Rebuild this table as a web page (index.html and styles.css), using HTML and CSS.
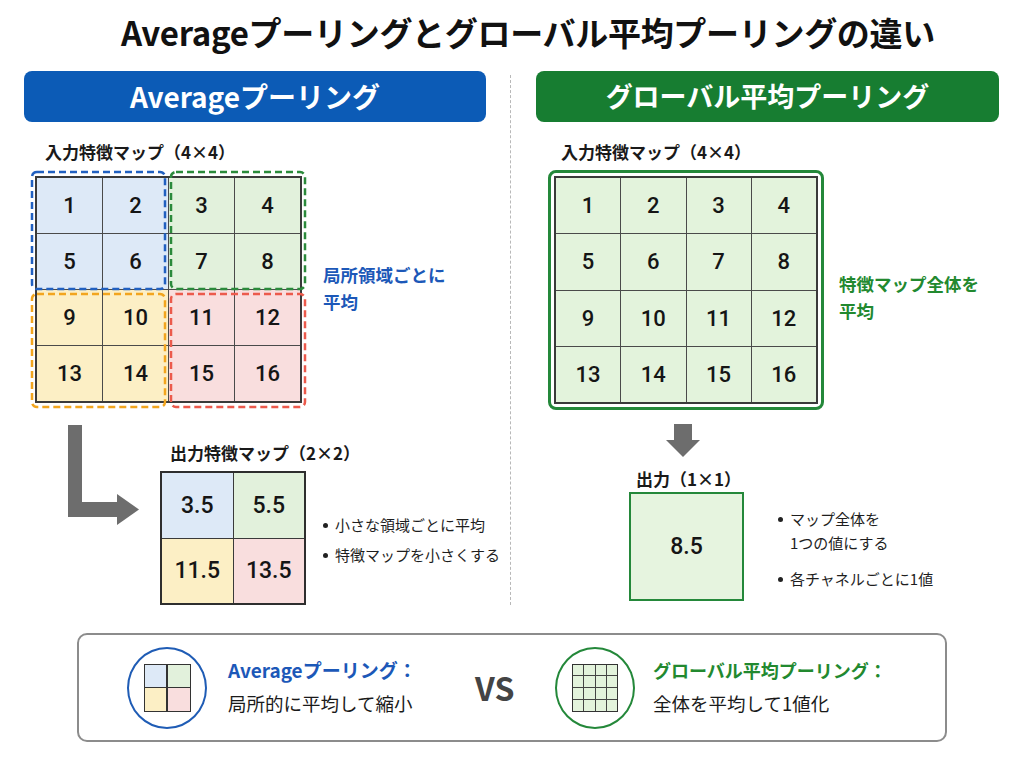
FILE: index.html
```html
<!DOCTYPE html>
<html lang="ja">
<head>
<meta charset="utf-8">
<title>Averageプーリングとグローバル平均プーリングの違い</title>
<link rel="stylesheet" href="styles.css">
</head>
<body>
<h1 class="title">Averageプーリングとグローバル平均プーリングの違い</h1>

<main class="compare">
  <section class="col col-avg">
    <div class="bar bar-blue">Averageプーリング</div>
    <div class="label label-avg">入力特徴マップ（4×4）</div>
    <div class="in-row">
      <div class="grid-wrap">
        <div class="grid4">
          <div class="cell qb">1</div><div class="cell qb">2</div><div class="cell qg">3</div><div class="cell qg">4</div>
          <div class="cell qb">5</div><div class="cell qb">6</div><div class="cell qg">7</div><div class="cell qg">8</div>
          <div class="cell qy">9</div><div class="cell qy">10</div><div class="cell qr">11</div><div class="cell qr">12</div>
          <div class="cell qy">13</div><div class="cell qy">14</div><div class="cell qr">15</div><div class="cell qr">16</div>
        </div>
        <svg class="dash-overlay" width="280" height="240" viewBox="0 0 280 240">
          <rect x="3" y="2" width="133" height="117" rx="5" stroke="#2160c0"/>
          <rect x="142" y="2" width="134" height="117" rx="5" stroke="#2b8a3b"/>
          <rect x="3" y="124" width="133" height="113" rx="5" stroke="#f2a51e"/>
          <rect x="142" y="124" width="134" height="113" rx="5" stroke="#ec5a4c"/>
        </svg>
      </div>
      <p class="note note-blue">局所領域ごとに<br>平均</p>
    </div>

    <div class="out-row">
      <svg class="l-arrow" width="74" height="100" viewBox="0 0 74 100">
        <rect x="2" y="0" width="14" height="92" fill="#6d6d6d"/>
        <rect x="2" y="77" width="52" height="15" fill="#6d6d6d"/>
        <polygon points="51,69 73,84.5 51,100" fill="#6d6d6d"/>
      </svg>
      <div class="out-block">
        <div class="label out-label">出力特徴マップ（2×2）</div>
        <div class="out-grid-row">
          <div class="grid2">
            <div class="cell big qb">3.5</div><div class="cell big qg">5.5</div>
            <div class="cell big qy">11.5</div><div class="cell big qr">13.5</div>
          </div>
          <ul class="bullets bullets-avg">
            <li>小さな領域ごとに平均</li>
            <li>特徴マップを小さくする</li>
          </ul>
        </div>
      </div>
    </div>
  </section>

  <div class="divider"></div>

  <section class="col col-gap">
    <div class="bar bar-green">グローバル平均プーリング</div>
    <div class="label label-gap">入力特徴マップ（4×4）</div>
    <div class="in-row">
      <div class="green-frame">
        <div class="grid4g">
          <div class="cell">1</div><div class="cell">2</div><div class="cell">3</div><div class="cell">4</div>
          <div class="cell">5</div><div class="cell">6</div><div class="cell">7</div><div class="cell">8</div>
          <div class="cell">9</div><div class="cell">10</div><div class="cell">11</div><div class="cell">12</div>
          <div class="cell">13</div><div class="cell">14</div><div class="cell">15</div><div class="cell">16</div>
        </div>
      </div>
      <p class="note note-green">特徴マップ全体を<br>平均</p>
    </div>

    <div class="gap-out">
      <svg class="down-arrow" width="34" height="33" viewBox="0 0 34 33">
        <rect x="8" y="0" width="18" height="18" fill="#6d6d6d"/>
        <polygon points="0,16 34,16 17,33" fill="#6d6d6d"/>
      </svg>
      <div class="label gap-out-label">出力（1×1）</div>
      <div class="gap-out-row">
        <div class="one-box">8.5</div>
        <ul class="bullets bullets-gap">
          <li>マップ全体を<br>1つの値にする</li>
          <li>各チャネルごとに1値</li>
        </ul>
      </div>
    </div>
  </section>
</main>

<div class="summary">
  <div class="sum-circle circle-blue">
    <div class="mini2">
      <div class="qb"></div><div class="qg"></div>
      <div class="qy"></div><div class="qr"></div>
    </div>
  </div>
  <div class="sum-text">
    <div class="sum-head head-blue">Averageプーリング：</div>
    <div class="sum-body">局所的に平均して縮小</div>
  </div>
  <div class="vs">VS</div>
  <div class="sum-circle circle-green">
    <div class="mini4">
      <div></div><div></div><div></div><div></div>
      <div></div><div></div><div></div><div></div>
      <div></div><div></div><div></div><div></div>
      <div></div><div></div><div></div><div></div>
    </div>
  </div>
  <div class="sum-text sum-text-green">
    <div class="sum-head head-green">グローバル平均プーリング：</div>
    <div class="sum-body">全体を平均して1値化</div>
  </div>
</div>
</body>
</html>
```

FILE: styles.css
```css
* { box-sizing: border-box; }

body {
  margin: 0;
  width: 1024px;
  height: 768px;
  background: #ffffff;
  font-family: "Noto Sans CJK JP", "Noto Sans", sans-serif;
  color: #1a1a1a;
  overflow: hidden;
}

.title {
  margin: 0;
  padding-top: 12px;
  height: 52px;
  line-height: 40px;
  font-size: 33px;
  font-weight: 700;
  text-align: center;
  color: #111;
  padding-left: 32px;
  letter-spacing: -0.3px;
}

.compare {
  display: flex;
  margin-top: 19px;
  padding-left: 24px;
}

.col-avg { width: 462px; }
.col-gap { width: 463px; }

.divider {
  width: 0;
  margin-left: 24px;
  margin-right: 25px;
  margin-top: 4px;
  border-left: 1px dashed #b8b8b8;
}

.bar {
  height: 51px;
  border-radius: 8px;
  color: #fff;
  font-weight: 700;
  display: flex;
  align-items: center;
  justify-content: center;
  line-height: 1;
}
.bar-blue { background: #0c5bb6; font-size: 28px; padding-bottom: 2px; }
.bar-green { background: #177d31; font-size: 27px; padding-bottom: 2px; }

.label {
  font-size: 17px;
  font-weight: 700;
  line-height: 22px;
  color: #1a1a1a;
  white-space: nowrap;
}
.label-avg { margin-top: 19px; padding-left: 21px; }
.label-gap { margin-top: 19px; padding-left: 25px; }

.in-row {
  display: flex;
  align-items: center;
}

.grid-wrap {
  position: relative;
  margin-left: 11px;
  margin-top: 13px;
}

.grid4 {
  width: 267px;
  height: 227px;
  display: grid;
  grid-template-columns: repeat(4, 1fr);
  grid-template-rows: repeat(4, 1fr);
  gap: 1px;
  background: #4a4a4a;
  border: 2px solid #3a3a3a;
}

.cell {
  display: flex;
  align-items: center;
  justify-content: center;
  font-family: Roboto, "Noto Sans", sans-serif;
  font-size: 22px;
  font-weight: 500;
  color: #151515;
}

.qb { background: #dde9f7; }
.qg { background: #e2f1dc; }
.qy { background: #fcefc5; }
.qr { background: #f9dede; }

.dash-overlay {
  position: absolute;
  left: -6px;
  top: -6px;
  fill: none;
  stroke-width: 2.5;
  stroke-dasharray: 7 4;
}

.note {
  margin: 0;
  font-size: 17.5px;
  font-weight: 700;
  line-height: 27px;
  white-space: nowrap;
}
.note-blue { color: #1c58b8; margin-left: 21px; margin-top: 10px; }
.note-green { color: #22892f; margin-left: 15px; margin-top: 20px; }

.out-row {
  display: flex;
  align-items: flex-start;
  margin-top: 22px;
}

.l-arrow { margin-left: 42px; flex: none; }

.out-block { margin-left: 20px; margin-top: 17px; }
.out-label { padding-left: 10px; line-height: 22px; }

.out-grid-row {
  display: flex;
  align-items: center;
  margin-top: 7px;
}

.grid2 {
  width: 146px;
  height: 134px;
  display: grid;
  grid-template-columns: 1fr 1fr;
  grid-template-rows: 1fr 1fr;
  gap: 1px;
  background: #3a3a3a;
  border: 2px solid #2e2e2e;
  flex: none;
}
.cell.big { font-size: 23px; }

.bullets {
  list-style: none;
  margin: 0;
  padding: 0;
  font-size: 15px;
  color: #1e1e1e;
  white-space: nowrap;
}
.bullets li {
  display: flex;
  align-items: flex-start;
  line-height: 24px;
}
.bullets li::before {
  content: "";
  flex: none;
  width: 5px;
  height: 5px;
  border-radius: 50%;
  background: #222;
  margin-top: 10px;
  margin-right: 7px;
}
.bullets-avg { margin-left: 17px; margin-top: 4px; }
.bullets-avg li + li { margin-top: 6px; }
.bullets-gap { margin-left: 34px; margin-top: 4px; }
.bullets-gap li + li { margin-top: 12px; }

.green-frame {
  margin-left: 12px;
  margin-top: 7px;
  border: 3px solid #24883a;
  border-radius: 8px;
  padding: 3px;
}

.grid4g {
  width: 264px;
  height: 228px;
  display: grid;
  grid-template-columns: repeat(4, 1fr);
  grid-template-rows: repeat(4, 1fr);
  gap: 1px;
  background: #4a4a4a;
  border: 2px solid #3a3a3a;
}
.grid4g .cell { background: #e3f3dc; }

.gap-out {
  margin-left: 93px;
  margin-top: 14px;
}
.down-arrow { display: block; margin-left: 37px; }
.gap-out-label { margin-top: 11px; padding-left: 7px; line-height: 22px; }

.gap-out-row {
  display: flex;
  align-items: center;
  margin-top: 2px;
}

.one-box {
  width: 115px;
  height: 109px;
  flex: none;
  border: 2.5px solid #24883a;
  background: #e6f4df;
  display: flex;
  align-items: center;
  justify-content: center;
  font-family: Roboto, "Noto Sans", sans-serif;
  font-size: 23px;
  font-weight: 500;
  color: #151515;
}

.summary {
  margin-top: 28px;
  margin-left: 77px;
  width: 870px;
  height: 109px;
  border: 2px solid #8c8c8c;
  border-radius: 10px;
  display: flex;
  align-items: center;
  padding-left: 48px;
}

.sum-circle {
  width: 80px;
  height: 82px;
  border-radius: 50%;
  flex: none;
  display: flex;
  align-items: center;
  justify-content: center;
}
.circle-blue { border: 2.5px solid #1f5cb5; }
.circle-green { border: 2.5px solid #24883a; }

.mini2 {
  width: 47px;
  height: 48px;
  display: grid;
  grid-template-columns: 1fr 1fr;
  grid-template-rows: 1fr 1fr;
  gap: 1.5px;
  background: #333;
  border: 1.5px solid #333;
}

.mini4 {
  width: 46px;
  height: 48px;
  display: grid;
  grid-template-columns: repeat(4, 1fr);
  grid-template-rows: repeat(4, 1fr);
  gap: 1px;
  background: #444;
  border: 1.5px solid #333;
}
.mini4 div { background: #e3f3dc; }

.sum-text {
  width: 247px;
  margin-left: 21px;
  margin-top: -2px;
  white-space: nowrap;
}
.sum-text-green { margin-left: 18px; width: auto; }

.sum-head {
  font-size: 18px;
  font-weight: 700;
  line-height: 32px;
}
.head-blue { color: #1c58b8; font-size: 19px; }
.head-green { color: #22892f; }

.sum-body {
  font-size: 18.5px;
  line-height: 34px;
  color: #1a1a1a;
}

.vs {
  width: 80px;
  font-size: 32px;
  font-weight: 700;
  color: #444;
  line-height: 1;
  padding-bottom: 2px;
}
```
